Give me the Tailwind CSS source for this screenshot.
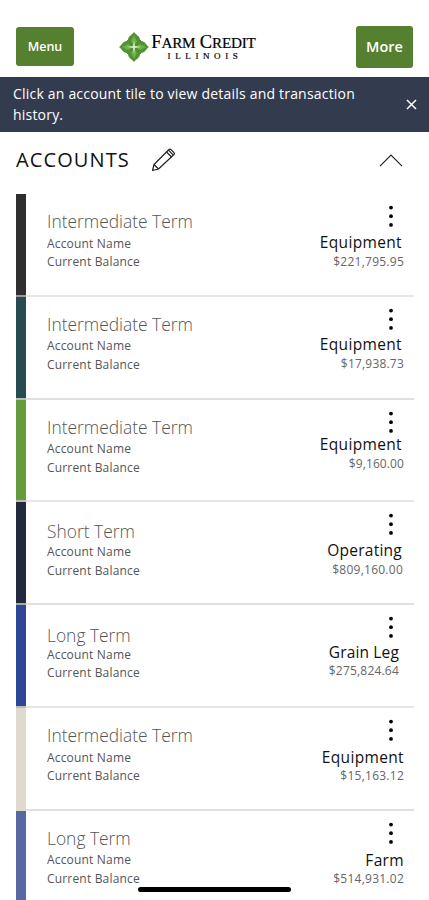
<!DOCTYPE html>
<html lang="en">
<head>
    <meta charset="UTF-8">
    <meta name="viewport" content="width=device-width, initial-scale=1.0">
    <title>Farm Credit Illinois - Accounts</title>
    <script src="https://cdn.jsdelivr.net/npm/@tailwindcss/browser@4"></script>
</head>
<body class="relative h-[900px] overflow-hidden bg-white font-['Open_Sans',sans-serif] text-[#222]">
    <!-- Shared icons -->
    <svg class="hidden">
        <symbol id="dots" viewBox="0 0 6 22">
            <circle cx="3" cy="2.6" r="1.9"/>
            <circle cx="3" cy="11.2" r="1.9"/>
            <circle cx="3" cy="19.9" r="1.9"/>
        </symbol>
    </svg>

    <!-- Header -->
    <header class="flex h-[77px] items-center px-4 pt-4">
        <button class="h-[39px] w-[58px] rounded-[3px] bg-[#54802f] pt-px text-[12.5px] font-semibold text-white">Menu</button>
        <div class="ml-[45px] flex items-center gap-[2px]">
            <svg class="h-[30px] w-[30px]" viewBox="0 0 30 30">
                <g fill="#4f9133">
                    <path d="M15 0C17 3 21 4 21 8C21 11 18 13 15 15C12 13 9 11 9 8C9 4 13 3 15 0Z"/>
                    <path d="M15 30C17 27 21 26 21 22C21 19 18 17 15 15C12 17 9 19 9 22C9 26 13 27 15 30Z"/>
                    <path d="M0 15C3 13 4 9 8 9C11 9 13 12 15 15C13 18 11 21 8 21C4 21 3 17 0 15Z"/>
                    <path d="M30 15C27 13 26 9 22 9C19 9 17 12 15 15C17 18 19 21 22 21C26 21 27 17 30 15Z"/>
                    <path d="M8 8H22V22H8Z"/>
                </g>
                <g fill="#72ad4b">
                    <path d="M15 3L18 9L15 14L12 9Z"/>
                    <path d="M15 27L18 21L15 16L12 21Z"/>
                    <path d="M3 15L9 12L14 15L9 18Z"/>
                    <path d="M27 15L21 12L16 15L21 18Z"/>
                </g>
                <path d="M15 8L16 14L22 15L16 16L15 22L14 16L8 15L14 14Z" fill="#d5ebc2"/>
            </svg>
            <div class="flex w-[105px] flex-col items-center pt-[1px] font-['Liberation_Serif',serif] text-black">
                <div class="text-[18.5px] leading-[16px] tracking-[-0.2px] whitespace-nowrap [-webkit-text-stroke:0.2px_black]">F<span class="text-[15.2px]">ARM</span> C<span class="text-[15.2px]">REDIT</span></div>
                <div class="pl-[3px] text-[9px] leading-[10px] tracking-[4.6px] whitespace-nowrap [-webkit-text-stroke:0.2px_black]">ILLINOIS</div>
            </div>
        </div>
        <button class="ml-auto h-[42px] w-[57px] rounded-[3px] bg-[#54802f] text-[14.5px] font-semibold text-white">More</button>
    </header>

    <!-- Info banner -->
    <div class="flex h-[55px] items-center justify-between bg-[#333b4e] pr-[12px] pb-px pl-[13px] text-white">
        <p class="w-[360px] text-[14px] leading-[21px] tracking-[0.2px]">Click an account tile to view details and transaction history.</p>
        <svg class="h-[11px] w-[11px]" viewBox="0 0 11 11" fill="none" stroke="white" stroke-width="1.5">
            <path d="M1 1L10 10M10 1L1 10"/>
        </svg>
    </div>

    <!-- Accounts title -->
    <div class="flex h-[62px] items-center px-4 pb-[6px]">
        <h1 class="w-[115px] text-[20px] tracking-[1.1px] whitespace-nowrap text-[#111]">ACCOUNTS</h1>
        <svg class="ml-[20px] h-[24px] w-[25px]" viewBox="0 0 25 24" fill="none" stroke="#222" stroke-width="1.2" stroke-linejoin="round">
            <path d="M1.5 22.5L3 16.5L18 1.5Q19 0.8 20 1.6L23 4.6Q23.8 5.6 23 6.5L7.5 21Z"/>
            <path d="M3 16.5L7.5 21M15.5 4L20.5 9M17.5 2.2L22.3 7.2"/>
        </svg>
        <svg class="mr-[10px] ml-auto h-[13px] w-[24px]" viewBox="0 0 24 13" fill="none" stroke="#222" stroke-width="1.2">
            <path d="M1 12.2L12 1.2L23 12.2"/>
        </svg>
    </div>

    <!-- Account list -->
    <ul class="pr-[15px] pl-4">
        <li class="flex h-[102.8px]">
            <div class="w-[10px] border-b-2 border-[#999] bg-[#2f2f2f]"></div>
            <div class="flex flex-1 justify-between border-b-2 border-[#e6e6e6] pl-[21px]">
                <div class="pt-[17px]">
                    <h2 class="mb-[3px] text-[17.4px] leading-[20px] font-light text-[#555]">Intermediate Term</h2>
                    <p class="text-[12px] leading-[19px] tracking-[0.18px] text-[#555]">Account Name</p>
                    <p class="text-[12px] leading-[18px] tracking-[0.18px] text-[#555]">Current Balance</p>
                </div>
                <div class="flex flex-col items-end pt-[11px] pr-[10px]">
                    <svg class="mr-[10px] mb-[6px] h-[22px] w-[6px]"><use href="#dots"/></svg>
                    <p class="mr-[2px] text-[15.5px] leading-[19px] font-medium tracking-[0.35px] text-[#111]">Equipment</p>
                    <p class="text-[12px] leading-[19px] tracking-[0.25px] text-[#666]">$221,795.95</p>
                </div>
            </div>
        </li>
        <li class="flex h-[102.8px]">
            <div class="w-[10px] border-b-2 border-[#bbb] bg-[#284a52]"></div>
            <div class="flex flex-1 justify-between border-b-2 border-[#e0e0e0] pl-[21px]">
                <div class="pt-[17px]">
                    <h2 class="mb-[2px] text-[17.4px] leading-[20px] font-light text-[#555]">Intermediate Term</h2>
                    <p class="text-[12px] leading-[19px] tracking-[0.18px] text-[#555]">Account Name</p>
                    <p class="text-[12px] leading-[19px] tracking-[0.18px] text-[#555]">Current Balance</p>
                </div>
                <div class="flex flex-col items-end pt-[11px] pr-[10px]">
                    <svg class="mr-[10px] mb-[5px] h-[22px] w-[6px]"><use href="#dots"/></svg>
                    <p class="mr-[2px] text-[15.5px] leading-[19px] font-medium tracking-[0.35px] text-[#111]">Equipment</p>
                    <p class="text-[12px] leading-[20px] tracking-[0.2px] text-[#666]">$17,938.73</p>
                </div>
            </div>
        </li>
        <li class="flex h-[102.8px]">
            <div class="w-[10px] border-b-2 border-[#bbb] bg-[#659b3b]"></div>
            <div class="flex flex-1 justify-between border-b-2 border-[#e6e6e6] pl-[21px]">
                <div class="pt-[17px]">
                    <h2 class="mb-[2px] text-[17.4px] leading-[20px] font-light text-[#555]">Intermediate Term</h2>
                    <p class="text-[12px] leading-[19px] tracking-[0.18px] text-[#555]">Account Name</p>
                    <p class="text-[12px] leading-[19px] tracking-[0.18px] text-[#555]">Current Balance</p>
                </div>
                <div class="flex flex-col items-end pt-[11px] pr-[10px]">
                    <svg class="mr-[10px] mb-[2px] h-[22px] w-[6px]"><use href="#dots"/></svg>
                    <p class="mr-[2px] text-[15.5px] leading-[19px] font-medium tracking-[0.35px] text-[#111]">Equipment</p>
                    <p class="text-[12px] leading-[19px] tracking-[0.1px] text-[#666]">$9,160.00</p>
                </div>
            </div>
        </li>
        <li class="flex h-[102.8px]">
            <div class="w-[10px] border-b-2 border-[#aaa] bg-[#232a3d]"></div>
            <div class="flex flex-1 justify-between border-b-2 border-[#e0e0e0] pl-[21px]">
                <div class="pt-[19px]">
                    <h2 class="mb-px text-[17.4px] leading-[20px] font-light text-[#555]">Short Term</h2>
                    <p class="text-[12px] leading-[19px] tracking-[0.18px] text-[#555]">Account Name</p>
                    <p class="text-[12px] leading-[19px] tracking-[0.18px] text-[#555]">Current Balance</p>
                </div>
                <div class="flex flex-col items-end pt-[11px] pr-[11px]">
                    <svg class="mr-[9px] mb-[6px] h-[22px] w-[6px]"><use href="#dots"/></svg>
                    <p class="mr-px text-[15.5px] leading-[19px] font-medium tracking-[0.25px] text-[#111]">Operating</p>
                    <p class="text-[12px] leading-[20px] tracking-[0.25px] text-[#666]">$809,160.00</p>
                </div>
            </div>
        </li>
        <li class="flex h-[102.8px]">
            <div class="w-[10px] border-b-2 border-[#bbb] bg-[#2f4696]"></div>
            <div class="flex flex-1 justify-between border-b-2 border-[#e6e6e6] pl-[21px]">
                <div class="pt-[20px]">
                    <h2 class="text-[17.4px] leading-[20px] font-light text-[#555]">Long Term</h2>
                    <p class="text-[12px] leading-[19px] tracking-[0.18px] text-[#555]">Account Name</p>
                    <p class="text-[12px] leading-[18px] tracking-[0.18px] text-[#555]">Current Balance</p>
                </div>
                <div class="flex flex-col items-end pt-[11px] pr-[14px]">
                    <svg class="mr-[6px] mb-[5px] h-[22px] w-[6px]"><use href="#dots"/></svg>
                    <p class="mr-px text-[15.5px] leading-[18px] font-medium tracking-[0.15px] text-[#111]">Grain Leg</p>
                    <p class="mr-px text-[12px] leading-[19px] tracking-[0.2px] text-[#666]">$275,824.64</p>
                </div>
            </div>
        </li>
        <li class="flex h-[102.8px]">
            <div class="w-[10px] border-b-2 border-[#e0dacd] bg-[#e0dacd]"></div>
            <div class="flex flex-1 justify-between border-b-2 border-[#e0e0e0] pl-[21px]">
                <div class="pt-[17px]">
                    <h2 class="mb-[3px] text-[17.4px] leading-[20px] font-light text-[#555]">Intermediate Term</h2>
                    <p class="text-[12px] leading-[19px] tracking-[0.18px] text-[#555]">Account Name</p>
                    <p class="text-[12px] leading-[18px] tracking-[0.18px] text-[#555]">Current Balance</p>
                </div>
                <div class="flex flex-col items-end pt-[11px] pr-[10px]">
                    <svg class="mr-[10px] mb-[7px] h-[22px] w-[6px]"><use href="#dots"/></svg>
                    <p class="text-[15.5px] leading-[18px] font-medium tracking-[0.35px] text-[#111]">Equipment</p>
                    <p class="text-[12px] leading-[19px] tracking-[0.25px] text-[#666]">$15,163.12</p>
                </div>
            </div>
        </li>
        <li class="flex h-[102.8px]">
            <div class="w-[10px] bg-[#5868a2]"></div>
            <div class="flex flex-1 justify-between pl-[21px]">
                <div class="pt-[17px]">
                    <h2 class="mb-[2px] text-[17.4px] leading-[20px] font-light text-[#555]">Long Term</h2>
                    <p class="text-[12px] leading-[19px] tracking-[0.18px] text-[#555]">Account Name</p>
                    <p class="text-[12px] leading-[19px] tracking-[0.18px] text-[#555]">Current Balance</p>
                </div>
                <div class="flex flex-col items-end pt-[11px] pr-[10px]">
                    <svg class="mr-[10px] mb-[7px] h-[22px] w-[6px]"><use href="#dots"/></svg>
                    <p class="text-[15.5px] leading-[18px] font-medium tracking-[0.35px] text-[#111]">Farm</p>
                    <p class="text-[12px] leading-[19px] tracking-[0.25px] text-[#666]">$514,931.02</p>
                </div>
            </div>
        </li>
    </ul>

    <!-- Home indicator -->
    <div class="absolute top-[887px] left-[138px] h-[5px] w-[153px] rounded-full bg-black"></div>
</body>
</html>
